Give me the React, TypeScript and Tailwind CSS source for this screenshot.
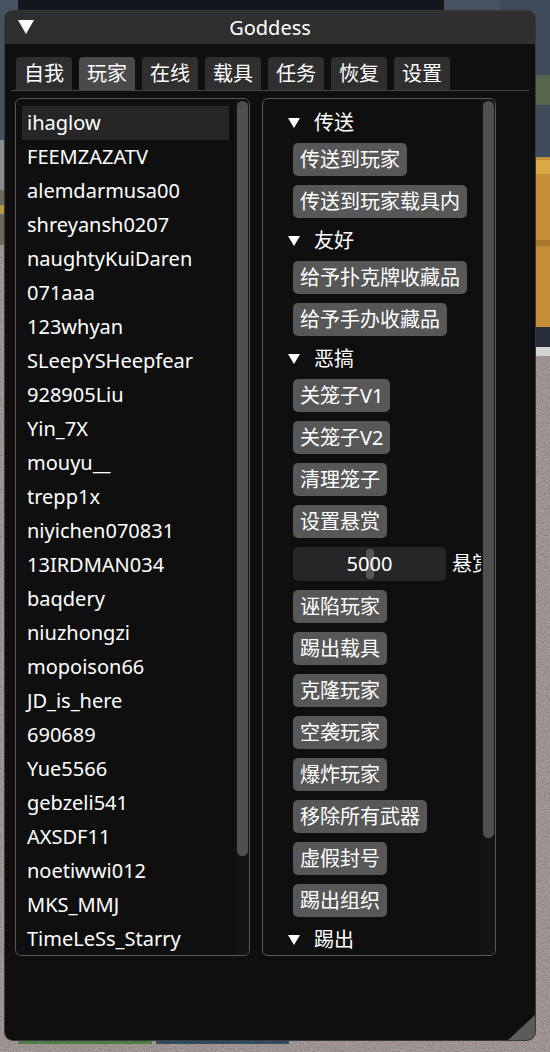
import React from "react";

const players = [
  "ihaglow",
  "FEEMZAZATV",
  "alemdarmusa00",
  "shreyansh0207",
  "naughtyKuiDaren",
  "071aaa",
  "123whyan",
  "SLeepYSHeepfear",
  "928905Liu",
  "Yin_7X",
  "mouyu__",
  "trepp1x",
  "niyichen070831",
  "13IRDMAN034",
  "baqdery",
  "niuzhongzi",
  "mopoison66",
  "JD_is_here",
  "690689",
  "Yue5566",
  "gebzeli541",
  "AXSDF11",
  "noetiwwi012",
  "MKS_MMJ",
  "TimeLeSs_Starry",
];

const tabs = ["自我", "玩家", "在线", "载具", "任务", "恢复", "设置"];

type Row =
  | { kind: "header"; label: string }
  | { kind: "button"; label: string }
  | { kind: "slider"; value: string; label: string };

const actions: Row[] = [
  { kind: "header", label: "传送" },
  { kind: "button", label: "传送到玩家" },
  { kind: "button", label: "传送到玩家载具内" },
  { kind: "header", label: "友好" },
  { kind: "button", label: "给予扑克牌收藏品" },
  { kind: "button", label: "给予手办收藏品" },
  { kind: "header", label: "恶搞" },
  { kind: "button", label: "关笼子V1" },
  { kind: "button", label: "关笼子V2" },
  { kind: "button", label: "清理笼子" },
  { kind: "button", label: "设置悬赏" },
  { kind: "slider", value: "5000", label: "悬赏金额" },
  { kind: "button", label: "诬陷玩家" },
  { kind: "button", label: "踢出载具" },
  { kind: "button", label: "克隆玩家" },
  { kind: "button", label: "空袭玩家" },
  { kind: "button", label: "爆炸玩家" },
  { kind: "button", label: "移除所有武器" },
  { kind: "button", label: "虚假封号" },
  { kind: "button", label: "踢出组织" },
  { kind: "header", label: "踢出" },
];

function Backdrop() {
  // blurry game scene behind the overlay window
  return (
    <svg className="absolute inset-0" width="550" height="1052" viewBox="0 0 550 1052">
      <defs>
        <filter id="grain" x="0" y="0" width="100%" height="100%">
          <feTurbulence type="fractalNoise" baseFrequency="0.85" numOctaves="2" seed="7" />
          <feColorMatrix
            type="matrix"
            values="0.9 0 0 0 0.1  0.6 0 0 0 0.15  0.6 0 0 0 0.15  0 0 0 0 1"
          />
        </filter>
      </defs>
      <rect x="0" y="0" width="550" height="1052" fill="#6f6c6a" />
      <rect x="0" y="240" width="550" height="812" filter="url(#grain)" opacity="0.55" />
      <rect x="0" y="0" width="550" height="140" fill="#46525f" />
      <rect x="0" y="140" width="20" height="50" fill="#8a8d90" />
      <rect x="0" y="190" width="20" height="55" fill="#6e695f" />
      <rect x="0" y="205" width="6" height="9" fill="#b39a40" />
      <rect x="500" y="0" width="50" height="75" fill="#3f4b5a" />
      <rect x="500" y="75" width="50" height="30" fill="#56654b" />
      <rect x="500" y="105" width="50" height="52" fill="#3e4c5e" />
      <rect x="500" y="157" width="50" height="170" fill="#c48f38" />
      <rect x="500" y="160" width="50" height="14" fill="#d9a945" />
      <rect x="500" y="240" width="50" height="6" fill="#a8782c" />
      <rect x="500" y="327" width="50" height="20" fill="#262d38" />
      <rect x="500" y="347" width="50" height="9" fill="#d2d2d2" />
      <rect x="18" y="0" width="426" height="10" fill="#12161d" />
      <rect x="18" y="1040" width="134" height="4" fill="#4f7d47" />
      <rect x="156" y="1040" width="133" height="4" fill="#2f4c60" />
    </svg>
  );
}

function DownTriangle({ w, h }: { w: number; h: number }) {
  return (
    <svg width={w} height={h} viewBox={`0 0 ${w} ${h}`} className="shrink-0">
      <polygon points={`0,0 ${w},0 ${w / 2},${h}`} fill="#ffffff" />
    </svg>
  );
}

function ScrollTrack({ grab }: { grab: string }) {
  return (
    <div className="w-[14px] shrink-0 bg-[#141414]">
      <div className={`ml-[2px] mt-[2px] w-[11px] rounded-full bg-[#4f4f4f] ${grab}`} />
    </div>
  );
}

export default function App() {
  return (
    <div className="relative w-[550px] h-[1052px] overflow-hidden pt-[11px] font-['Noto_Sans','Noto_Sans_CJK_SC',sans-serif] text-white">
      <Backdrop />

      <div className="relative ml-[5px] flex h-[1029px] w-[530px] flex-col overflow-hidden rounded-[8px] bg-[#0f0f0f] shadow-[0_0_0_1px_#3a3a3a]">
        {/* Title bar */}
        <div className="relative flex h-[33px] shrink-0 items-center justify-center bg-[#2f2f2f] text-[20px] leading-none">
          <div className="absolute left-[13px] top-[9px]">
            <DownTriangle w={16} h={14} />
          </div>
          <span>Goddess</span>
        </div>

        <div className="flex flex-col px-[6px] pt-[13px]">
          {/* Tabs */}
          <div className="flex gap-[7px] pl-[5px]">
            {tabs.map((t, i) => (
              <div
                key={t}
                className={`flex h-[33px] items-center rounded-t-[4px] px-[8px] text-[20px] leading-none ${
                  i === 1 ? "bg-[#4a4a4a]" : "bg-[#2f2f2f]"
                }`}
              >
                {t}
              </div>
            ))}
          </div>
          <div className="h-px bg-[#454545]" />

          {/* Panels */}
          <div className="mt-[7px] flex gap-[12px] pl-[4px]">
            <div className="flex h-[858px] w-[235px] overflow-hidden rounded-[6px] border border-[#595959]">
              <div className="w-[219px] shrink-0 overflow-hidden px-[6px] pt-[7px]">
                {players.map((p, i) => (
                  <div
                    key={p}
                    className={`flex h-[34px] items-center px-[5px] text-[20px] leading-none whitespace-nowrap ${
                      i === 0 ? "bg-[#262626]" : ""
                    }`}
                  >
                    {p}
                  </div>
                ))}
              </div>
              <ScrollTrack grab="h-[755px]" />
            </div>

            <div className="flex h-[858px] w-[234px] overflow-hidden rounded-[6px] border border-[#595959]">
              <div className="flex w-[218px] shrink-0 flex-col overflow-hidden pt-[10px] text-[20px] leading-none">
                {actions.map((a, i) => {
                  const prev = actions[i - 1];
                  if (a.kind === "header") {
                    return (
                      <div
                        key={a.label}
                        className={`flex h-[28px] shrink-0 items-center gap-[14px] pl-[25px] ${i === 0 ? "" : "mt-[9px]"}`}
                      >
                        <DownTriangle w={12} h={10} />
                        <span>{a.label}</span>
                      </div>
                    );
                  }
                  const top = prev && prev.kind === "header" ? "mt-[6px]" : "mt-[9px]";
                  if (a.kind === "slider") {
                    return (
                      <div key={a.label} className={`ml-[30px] flex shrink-0 items-center gap-[6px] whitespace-nowrap ${top}`}>
                        <div className="relative flex h-[34px] w-[153px] shrink-0 items-center justify-center rounded-[5px] bg-[#262626]">
                          <div className="absolute left-[73px] top-[2px] h-[30px] w-[8px] rounded-[3px] bg-[#555555]" />
                          <span className="relative">{a.value}</span>
                        </div>
                        <span>{a.label}</span>
                      </div>
                    );
                  }
                  return (
                    <div
                      key={a.label}
                      className={`ml-[30px] flex h-[33px] shrink-0 items-center self-start whitespace-nowrap rounded-[5px] bg-[#575757] px-[7px] ${top}`}
                    >
                      {a.label}
                    </div>
                  );
                })}
              </div>
              <ScrollTrack grab="h-[737px]" />
            </div>
          </div>
        </div>

        {/* Resize grip */}
        <div className="absolute bottom-0 right-0">
          <svg width="27" height="25" viewBox="0 0 27 25">
            <polygon points="27,0 27,25 0,25" fill="#5b5b5b" />
          </svg>
        </div>
      </div>
    </div>
  );
}
